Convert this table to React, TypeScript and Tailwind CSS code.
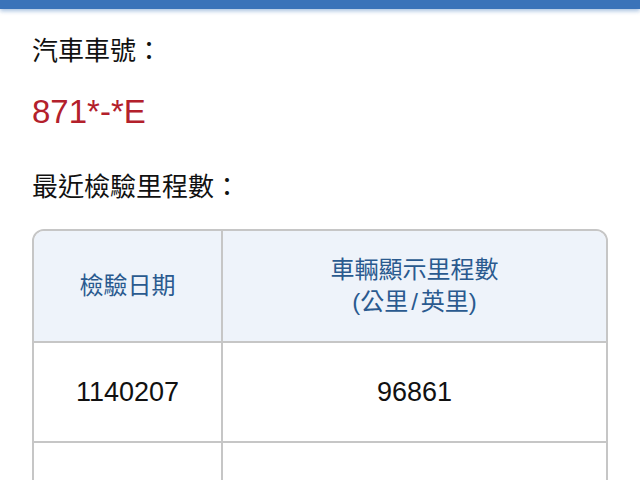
export default function App() {
  const rows = [
    { date: '1140207', km: '96861' },
    { date: '', km: '' },
  ];
  return (
    <div
      className="min-h-screen bg-white text-[#111111]"
      style={{ fontFamily: '"Liberation Sans", "Noto Sans CJK TC", sans-serif' }}
    >
      {/* Top bar */}
      <div className="h-[9px] bg-[#3a73b9] shadow-[0_2px_4px_rgba(58,115,185,0.45)]" />

      <div className="px-[32px]">
        <div className="mt-[24px] text-[26px] leading-[36px]">汽車車號：</div>
        <div className="mt-[23px] text-[33px] leading-[40px] text-[#b3202b]">871*-*E</div>
        <div className="mt-[37px] text-[26px] leading-[36px]">最近檢驗里程數：</div>

        {/* Mileage table */}
        <div className="mt-[24px] border-2 border-[#c6c6c6] rounded-[12px] overflow-hidden">
          <div className="grid grid-cols-[189px_1fr] bg-[#eef3fa] text-[#2a5a8f] text-[24px] leading-[32px] border-b-2 border-[#c6c6c6]">
            <div className="h-[110px] flex items-center justify-center border-r-2 border-[#c6c6c6]">
              檢驗日期
            </div>
            <div className="h-[110px] flex flex-col items-center justify-center">
              <span>車輛顯示里程數</span>
              <span>
                (公里<span className="mx-[3px]">/</span>英里)
              </span>
            </div>
          </div>
          {rows.map((r, i) => (
            <div
              key={i}
              className="grid grid-cols-[189px_1fr] text-[27px] border-b-2 border-[#c6c6c6] last:border-b-0"
            >
              <div className="h-[98px] flex items-center justify-center border-r-2 border-[#c6c6c6]">
                {r.date}
              </div>
              <div className="h-[98px] flex items-center justify-center">{r.km}</div>
            </div>
          ))}
        </div>
      </div>
    </div>
  );
}
